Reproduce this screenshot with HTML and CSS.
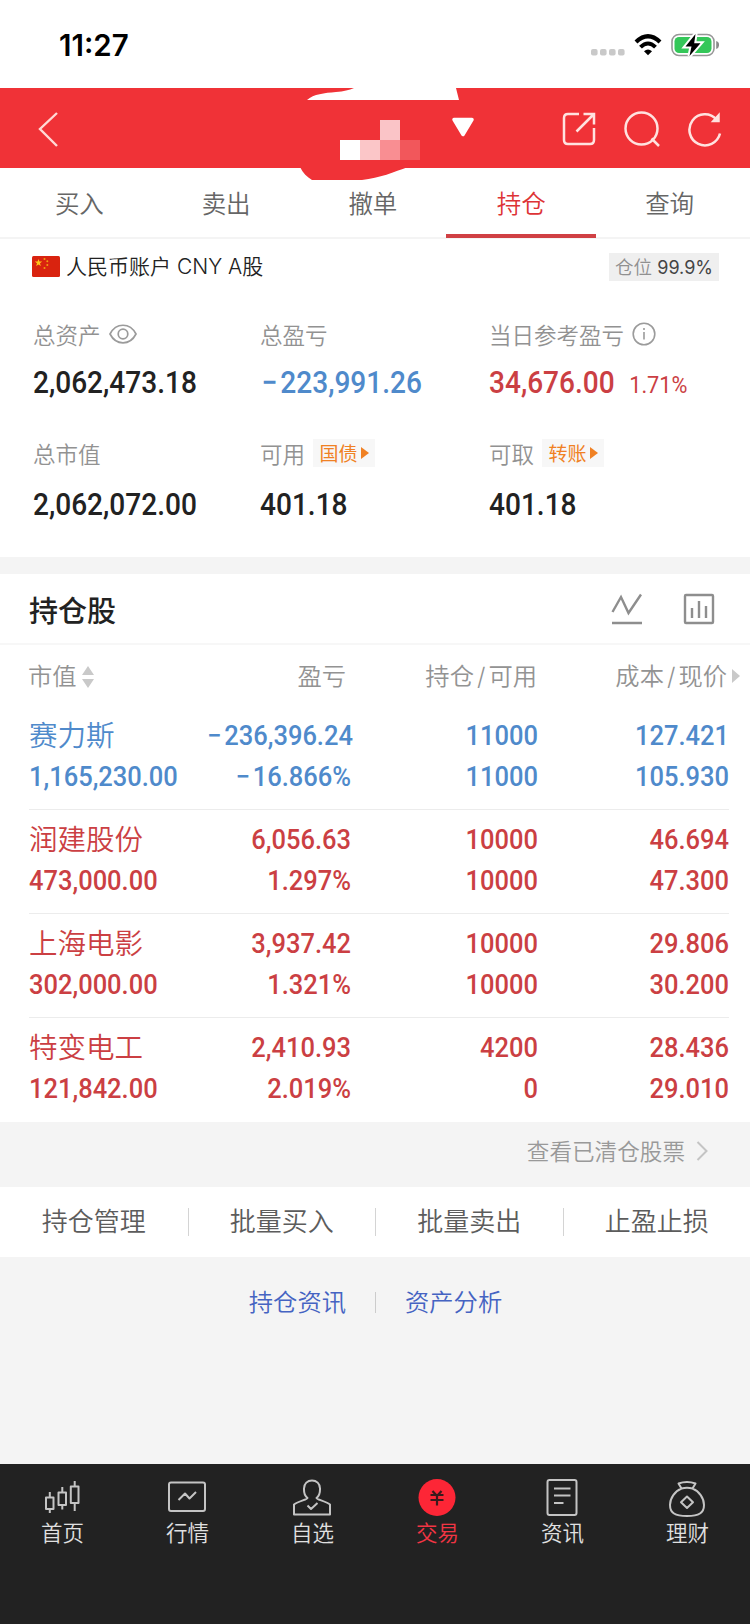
FILE: index.html
```
<!DOCTYPE html>
<html lang="zh-CN">
	<head>
		<meta charset="utf-8" />
		<title>持仓</title>
		<link rel="stylesheet" href="styles.css">
	</head>
	<body>
		<div class="status">
			<div class="clock">11:27</div>
			<div class="status-icons">
				<svg class="dots" width="34" height="8" viewBox="0 0 34 8" fill="#c9c9c9">
					<rect x="0" y="1" width="6.6" height="6.6" rx="2"/><rect x="9" y="1" width="6.6" height="6.6" rx="2"/><rect x="18" y="1" width="6.6" height="6.6" rx="2"/><rect x="27" y="1" width="6.6" height="6.6" rx="2"/>
				</svg>
				<svg class="wifi" width="28" height="22" viewBox="0 0 28 22">
					<path d="M2 8 Q14 -3.5 26 8" fill="none" stroke="#000" stroke-width="4.2"/>
					<path d="M6.5 13.2 Q14 5.8 21.500 13.2" fill="none" stroke="#000" stroke-width="4"/>
					<path d="M10 17.200 Q14 13.600 18 17.200 L14 21.200 Z"/>
				</svg>
				<svg class="battery" width="48" height="24" viewBox="0 0 48 24">
					<rect x="1" y="1.500" width="42" height="21" rx="7" fill="#fff" stroke="#979797" stroke-width="1.600"/>
					<rect x="3.500" y="4" width="37" height="16" rx="4.500" fill="#34c759"/>
					<path d="M45.200 8 Q48.400 9 48 12 Q48.200 15 45.200 16 Z" fill="#8a8a8a"/>
					<path d="M24.500 1 L14.500 13.500 H20.500 L18.500 23 L29.500 10.200 H23.200 Z" fill="#000" stroke="#fff" stroke-width="4" paint-order="stroke"/>
				</svg>
			</div>
		</div>

		<div class="header">
			<svg class="back" width="22" height="38" viewBox="0 0 22 38"><path d="M20 3 L3 19 L20 36" fill="none" stroke="#ffd9d5" stroke-width="2.400"/></svg>
			<svg class="mask" width="220" height="92" viewBox="0 0 220 92">
				<path d="M7 12 C14 6 24 5 36 4 C44 3.500 49 2 54 0 H156 L159 12 Z" fill="#fff"/>
				<path d="M0 79 C3 85 7 89 12 92 H62 C80 90 94 84 108 79 Z" fill="#f03237"/>
				<rect x="40" y="52" width="20" height="20" fill="#fff"/>
				<rect x="60" y="52" width="20" height="20" fill="#fbc6c8"/>
				<rect x="80" y="32" width="20" height="20" fill="#fac4c7"/>
				<rect x="80" y="52" width="20" height="20" fill="#f98e92"/>
				<rect x="100" y="52" width="20" height="20" fill="#f2575b"/>
				<path d="M154 31.500 H172 L163 46.500 Z" fill="#fff" stroke="#fff" stroke-width="3.500" stroke-linejoin="round"/>
			</svg>
			<div class="tools">
				<svg width="34" height="36" viewBox="0 0 34 36" fill="none" stroke="#ffe2df" stroke-width="2.500">
					<path d="M17 3 H6 Q2 3 2 7 V29 Q2 33 6 33 H28 Q32 33 32 29 V17 M14.500 20.500 L31.500 3.500 M21.500 3 H32 V13.500"/>
				</svg>
				<svg width="36" height="36" viewBox="0 0 36 36" fill="none" stroke="#ffe2df" stroke-width="2.500">
					<circle cx="17.500" cy="17.500" r="16"/><path d="M27.500 27.500 L35 35"/>
				</svg>
				<svg width="35" height="36" viewBox="0 0 35 36" fill="none" stroke="#ffe2df" stroke-width="2.500">
					<path d="M29.500 8.500 A15.500 15.500 0 1 0 33 22.500"/><path d="M31.500 4.500 V10 H26.500 Z" fill="#ffe2df"/>
				</svg>
			</div>
		</div>

		<div class="tabs">
			<div class="tab">买入</div>
			<div class="tab">卖出</div>
			<div class="tab">撤单</div>
			<div class="tab active">持仓</div>
			<div class="tab">查询</div>
		</div>

		<div class="account">
			<svg class="flag" width="28" height="21" viewBox="0 0 28 21">
				<rect width="28" height="21" rx="1.500" fill="#d9230f"/>
				<path d="M6.500 3 L7.400 5.600 H10.200 L8 7.300 L8.800 10 L6.500 8.400 L4.200 10 L5 7.300 L2.800 5.600 H5.600 Z" fill="#ffc61a"/>
				<g fill="#f0a012"><circle cx="12.500" cy="3" r="1"/><circle cx="15.300" cy="5.300" r="1"/><circle cx="15.300" cy="9" r="1"/><circle cx="12.500" cy="12" r="1"/></g>
			</svg>
			<span class="account-name">人民币账户 CNY A股</span>
			<span class="position">仓位 <b>99.9%</b></span>
		</div>

		<div class="summary">
			<div class="cell">
				<div class="label">总资产
					<svg class="eye" width="28" height="20" viewBox="0 0 28 20" fill="none" stroke="#9b9b9b" stroke-width="1.700"><path d="M1 10 C7 -1.700 21 -1.700 27 10 C21 21.700 7 21.700 1 10 Z"/><circle cx="14" cy="10" r="4.800"/></svg>
				</div>
				<div class="value">2,062,473.18</div>
			</div>
			<div class="cell">
				<div class="label">总盈亏</div>
				<div class="value down"><s>−</s>223,991.26</div>
			</div>
			<div class="cell">
				<div class="label">当日参考盈亏
					<svg class="info" width="24" height="24" viewBox="0 0 24 24" fill="none" stroke="#9b9b9b" stroke-width="1.600"><circle cx="12" cy="12" r="10.800"/><path d="M12 10 V17.500 M12 6 V8"/></svg>
				</div>
				<div class="value up">34,676.00<small>1.71%</small></div>
			</div>
			<div class="cell">
				<div class="label">总市值</div>
				<div class="value">2,062,072.00</div>
			</div>
			<div class="cell">
				<div class="label">可用<span class="tag">国债<i></i></span></div>
				<div class="value">401.18</div>
			</div>
			<div class="cell">
				<div class="label">可取<span class="tag">转账<i></i></span></div>
				<div class="value">401.18</div>
			</div>
		</div>

		<div class="title">
			<h2>持仓股</h2>
			<svg width="32" height="32" viewBox="0 0 32 32" fill="none" stroke="#8e8e8e" stroke-width="2.400"><path d="M1.500 19 L10 4 L17.500 20 L30 1.500 M1 30 H31"/></svg>
			<svg width="32" height="32" viewBox="0 0 32 32" fill="none" stroke="#8e8e8e" stroke-width="2.400"><rect x="2" y="2" width="28" height="28" rx="1"/><path d="M9 15 V25 M16 8 V25 M23 13 V25"/></svg>
		</div>

		<div class="stock-head">
			<div>市值<svg class="sort" width="12" height="22" viewBox="0 0 12 22" fill="#c9c9c9"><path d="M0 9 L6 0 L12 9 Z M0 13 H12 L6 22 Z"/></svg></div>
			<div>盈亏</div>
			<div>持仓<em>/</em>可用</div>
			<div>成本<em>/</em>现价<i></i></div>
		</div>

		<div class="stocks">
			<div class="stock down">
				<div class="name">赛力斯</div><div><s>−</s>236,396.24</div><div>11000</div><div>127.421</div>
				<div>1,165,230.00</div><div><s>−</s>16.866%</div><div>11000</div><div>105.930</div>
			</div>
			<div class="stock up">
				<div class="name">润建股份</div><div>6,056.63</div><div>10000</div><div>46.694</div>
				<div>473,000.00</div><div>1.297%</div><div>10000</div><div>47.300</div>
			</div>
			<div class="stock up">
				<div class="name">上海电影</div><div>3,937.42</div><div>10000</div><div>29.806</div>
				<div>302,000.00</div><div>1.321%</div><div>10000</div><div>30.200</div>
			</div>
			<div class="stock up">
				<div class="name">特变电工</div><div>2,410.93</div><div>4200</div><div>28.436</div>
				<div>121,842.00</div><div>2.019%</div><div>0</div><div>29.010</div>
			</div>
		</div>

		<div class="cleared">查看已清仓股票
			<svg width="12" height="20" viewBox="0 0 12 20"><path d="M1.500 1 L10.500 10 L1.500 19" fill="none" stroke="#c4c4c4" stroke-width="2"/></svg>
		</div>

		<div class="actions">
			<div>持仓管理</div>
			<div>批量买入</div>
			<div>批量卖出</div>
			<div>止盈止损</div>
		</div>

		<div class="links">
			<a>持仓资讯</a>
			<a>资产分析</a>
		</div>

		<div class="nav">
			<div class="nav-item">
				<svg width="40" height="40" viewBox="0 0 40 40"><path d="M4 18.500 H11.500 V30 H4 Z M7.800 13 V18.500 M7.800 30 V34 M16.500 13.500 H24 V26 H16.500 Z M20.300 8 V13.500 M20.300 26 V30.500 M28.800 7.500 H36.500 V24 H28.800 Z M32.700 2 V7.500 M32.700 24 V32"/></svg>
				<span>首页</span>
			</div>
			<div class="nav-item">
				<svg width="40" height="40" viewBox="0 0 40 40"><rect x="2" y="3.500" width="36" height="28.500" rx="2"/><path d="M11.500 21 L18 14.500 L22.500 19.500 L29 13"/></svg>
				<span>行情</span>
			</div>
			<div class="nav-item">
				<svg width="40" height="40" viewBox="0 0 40 40"><path d="M15.500 19 C11.500 16 12 12 12 9.500 C12 4.500 15.500 1.500 20 1.500 C24.500 1.500 28 4.500 28 9.500 C28 12 28.500 16 24.500 19 C24.500 20.500 33 22 38 25.500 V35.500 H2 V25.500 C7 22 15.500 20.500 15.500 19 Z M15.500 26.500 L19 30 L25.500 24"/></svg>
				<span>自选</span>
			</div>
			<div class="nav-item on">
				<svg width="40" height="40" viewBox="0 0 40 40"><circle cx="20" cy="18.500" r="18.500" fill="#fd2636" stroke="none"/><path d="M15.500 12 L20 17 L24.500 12 M13.500 16 H26.500 M13.500 21 H26.500 M20 16 V26.500" stroke="#3a1a1c" stroke-width="2.200"/></svg>
				<span>交易</span>
			</div>
			<div class="nav-item">
				<svg width="40" height="40" viewBox="0 0 40 40"><rect x="5.500" y="1" width="29" height="35" rx="2"/><path d="M12 9.500 H28.500 M12 16.500 H28.500 M12 24 H21.500"/></svg>
				<span>资讯</span>
			</div>
			<div class="nav-item">
				<svg width="40" height="40" viewBox="0 0 40 40"><path d="M14.500 9.500 L11.500 4.500 Q20 1.500 28.500 4.500 L25.500 9.500 M14.500 9.500 Q20 8 25.500 9.500 C32 12 37 19 37 26 C37 34 32 37 20 37 C8 37 3 34 3 26 C3 19 8 12 14.500 9.500 Z M20 17.500 L26 23.200 L20 29 L14 23.200 Z"/></svg>
				<span>理财</span>
			</div>
		</div>
	</body>
</html>
```

FILE: styles.css
```
*{
	box-sizing: border-box;
}

body{
	margin: 0;
	width: 750px;
	height: 1624px;
	display: flex;
	flex-direction: column;
	background-color: #f4f4f4;
	color: #222;
	font-family: Inter, "Noto Sans CJK SC", sans-serif;
	font-weight: 350;
	overflow: hidden;
}

svg{
	display: block;
	flex: none;
}

/* 负号 */
s{
	text-decoration: none;
	margin: 0 3px 0 2px;
}

.up{
	color: #cb3f43;
}

.down{
	color: #4f8acb;
}

/* 状态栏 */
.status{
	height: 88px;
	background-color: #fff;
	display: flex;
	justify-content: space-between;
	padding: 0 31px 0 59px;
}

.clock{
	font-size: 29.5px;
	line-height: 91px;
	font-weight: 600;
	color: #000;
}

.status-icons{
	display: flex;
	align-items: center;
	padding-top: 2px;
}

.dots{
	margin: 13px 9px 0 0;
}

.wifi{
	margin-right: 9px;
}

/* 顶部 */
.header{
	height: 80px;
	background-color: #f03237;
	display: flex;
	align-items: center;
	justify-content: space-between;
	padding: 2px 28px 0 37px;
	position: relative;
}

.mask{
	position: absolute;
	left: 300px;
	top: 0;
}

.tools{
	display: flex;
	gap: 28px;
}

.tools svg:nth-child(2){
	margin-right: -1px;
}

.tabs{
	height: 71px;
	background-color: #fff;
	border-bottom: 2px solid #f4f4f4;
	display: flex;
	padding: 0 7px 0 6px;
}

.tab{
	flex: 1;
	text-align: center;
	font-size: 24.5px;
	line-height: 72px;
	height: 70px;
	color: #666;
}

.tab.active{
	color: #dd3336;
	border-bottom: 4px solid #d04044;
	flex: 0 0 150px;
}

/* 账户 */
.account{
	height: 55px;
	background-color: #fff;
	display: flex;
	align-items: center;
	margin-bottom: -1px;
	padding: 0 31px 0 32px;
	font-size: 21px;
	background-image: linear-gradient(#f2f2f2, #f2f2f2);
	background-size: 688px 1px;
	background-position: 32px 54px;
	background-repeat: no-repeat;
}

.account-name{
	margin: -3px 0 0 6px;
	flex: 1;
}

.position{
	background-color: #efefef;
	width: 110px;
	height: 28px;
	line-height: 28px;
	font-size: 18.5px;
	text-align: center;
	color: #909090;
	white-space: nowrap;
}

.position b{
	font-weight: 400;
	font-size: 18px;
	color: #444;
}

/* 资产 */
.summary{
	height: 264px;
	background-color: #fff;
	display: grid;
	grid-template-columns: 227px 229px 1fr;
	grid-template-rows: 119px 119px;
	padding: 22px 0 0 33px;
}

.label{
	height: 37px;
	display: flex;
	align-items: center;
	font-size: 22.5px;
	color: #929292;
}

.eye{
	margin-left: 8px;
}

.info{
	margin-left: 8px;
}

.value{
	font-family: Roboto, sans-serif;
	font-weight: 500;
	font-size: 31px;
	line-height: 61px;
	white-space: nowrap;
	transform: scaleX(.905);
	transform-origin: left;
}

.cell:nth-child(n+4) .value{
	line-height: 67px;
}

.value small{
	font-size: 24px;
	font-weight: 400;
	margin-left: 16px;
}

.tag{
	margin: 1px 0 0 8px;
	width: 62px;
	height: 28px;
	padding-top: 3px;
	display: flex;
	align-items: center;
	justify-content: center;
	background-color: #f7f7f7;
	font-size: 19px;
	line-height: 28px;
	font-weight: 400;
	color: #f08124;
}

.tag i{
	margin: -3px 0 0 3px;
	border-left: 8px solid #f08124;
	border-top: 6px solid transparent;
	border-bottom: 6px solid transparent;
}

/* 持仓列表 */
.title{
	margin-top: 17px;
	height: 71px;
	background-color: #fff;
	border-bottom: 2px solid #f7f7f7;
	display: flex;
	align-items: center;
	padding: 0 35px 0 29px;
	gap: 40px;
}

.title h2{
	flex: 1;
	margin: 1px 0 0;
	font-size: 29px;
	font-weight: 500;
}

.stock-head{
	height: 61px;
	background-color: #fff;
	display: grid;
	grid-template-columns: 180px 138px 191px 1fr;
	padding: 0 10px 0 28px;
	font-size: 24.3px;
	line-height: 62px;
	color: #939393;
}

.stock-head div{
	display: flex;
	justify-content: flex-end;
	align-items: center;
	white-space: nowrap;
}

.stock-head div:first-child{
	justify-content: flex-start;
}

.stock-head em{
	font-style: normal;
	margin: 0 3px;
}

.sort{
	margin: 1px 0 0 5px;
}

.stock-head i{
	margin: 0 0 0 5px;
	border-left: 8px solid #c9c9c9;
	border-top: 7px solid transparent;
	border-bottom: 7px solid transparent;
}

.stocks{
	background-color: #fff;
	height: 416px;
}

.stock{
	height: 104px;
	margin: 0 21px 0 29px;
	display: grid;
	grid-template-columns: 162px 160px 187px 191px;
	grid-template-rows: 41px 40px;
	padding-top: 9px;
	border-bottom: 1px solid #ececec;
	font-family: Roboto, "Noto Sans CJK SC", sans-serif;
	font-size: 28px;
	font-weight: 500;
	line-height: 42px;
}

.stock:last-child{
	border-bottom: 0;
}

.stock div{
	text-align: right;
	white-space: nowrap;
	transform: scaleX(.91);
	transform-origin: right;
}

.stock div:nth-child(4n+1){
	text-align: left;
	transform-origin: left;
}

.stock .name{
	font-size: 28.5px;
	font-weight: 350;
	line-height: 43px;
	transform: none;
}

.cleared{
	height: 65px;
	display: flex;
	align-items: center;
	justify-content: flex-end;
	gap: 11px;
	padding: 0 42px 9px 0;
	font-size: 22.6px;
	color: #999;
}

.cleared svg{
	margin-top: 2px;
}

.actions{
	height: 70px;
	background-color: #fff;
	display: grid;
	grid-template-columns: repeat(4, 1fr);
	align-items: center;
	font-size: 26px;
	color: #5c5c5c;
}

.actions div{
	height: 28px;
	line-height: 28px;
	text-align: center;
}

.actions div + div{
	border-left: 1px solid #d4d4d4;
}

.links{
	flex: 1;
	display: flex;
	justify-content: center;
	padding: 36px 0 0 1px;
	font-size: 24.3px;
	color: #4563c2;
}

.links a{
	height: 21px;
	line-height: 20px;
	padding: 0 29px;
	margin-top: -1px;
}

.links a + a{
	border-left: 1px solid #ccc;
}

/* 底部导航 */
.nav{
	height: 160px;
	background-color: #222;
	display: flex;
}

.nav-item{
	width: 125px;
	display: flex;
	flex-direction: column;
	align-items: center;
	padding-top: 15px;
	font-size: 21.5px;
	line-height: 29px;
	color: #e0e0e0;
}

.nav-item svg{
	fill: none;
	stroke: #c4c4c4;
	stroke-width: 2;
	stroke-linejoin: round;
	margin-right: 1px;
}

.nav-item.on{
	color: #f23544;
}
```
